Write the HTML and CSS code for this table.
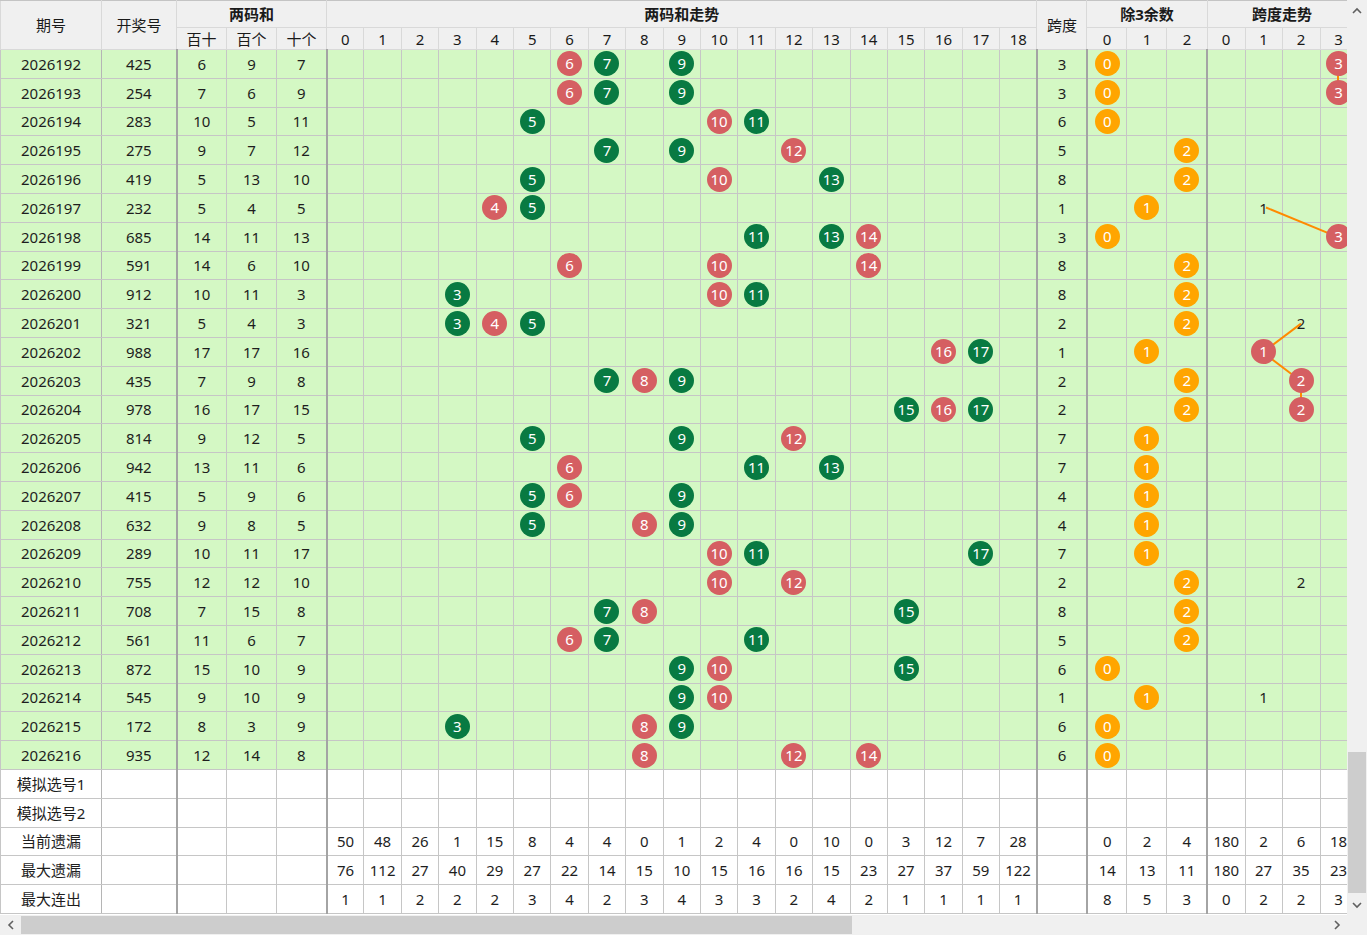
FILE: index.html
```html
<!DOCTYPE html>
<html lang="zh-CN">
<head>
<meta charset="utf-8">
<title>两码和走势</title>
<link rel="stylesheet" href="styles.css">
</head>
<body>
<div class="window">
  <div class="main">
    <div class="viewport">
      <table class="grid">
        <colgroup>
          <col class="c101"><col class="c75">
          <col class="c50"><col class="c50"><col class="c50">
          <col class="t"><col class="t"><col class="t"><col class="t"><col class="t"><col class="t"><col class="t"><col class="t"><col class="t"><col class="t"><col class="t"><col class="t"><col class="t"><col class="t"><col class="t"><col class="t"><col class="t"><col class="t"><col class="t">
          <col class="c50">
          <col class="c40"><col class="c40"><col class="c40">
          <col class="c38"><col class="c37"><col class="c38"><col class="c37">
        </colgroup>
        <thead>
          <tr class="h1">
            <th rowspan="2">期号</th><th rowspan="2">开奖号</th>
            <th colspan="3" class="grp">两码和</th>
            <th colspan="19" class="grp">两码和走势</th>
            <th rowspan="2">跨度</th>
            <th colspan="3" class="grp">除3余数</th>
            <th colspan="4" class="grp">跨度走势</th>
          </tr>
          <tr class="h2">
            <th>百十</th><th>百个</th><th>十个</th>
            <th>0</th><th>1</th><th>2</th><th>3</th><th>4</th><th>5</th><th>6</th><th>7</th><th>8</th><th>9</th><th>10</th><th>11</th><th>12</th><th>13</th><th>14</th><th>15</th><th>16</th><th>17</th><th>18</th>
            <th>0</th><th>1</th><th>2</th>
            <th>0</th><th>1</th><th>2</th><th>3</th>
          </tr>
        </thead>
        <tbody>
          <tr class="d"><td>2026192</td><td>425</td><td>6</td><td>9</td><td>7</td><td></td><td></td><td></td><td></td><td></td><td></td><td><span class="b r">6</span></td><td><span class="b g">7</span></td><td></td><td><span class="b g">9</span></td><td></td><td></td><td></td><td></td><td></td><td></td><td></td><td></td><td></td><td>3</td><td><span class="b o">0</span></td><td></td><td></td><td></td><td></td><td></td><td><span class="b r">3</span></td></tr>
          <tr class="d"><td>2026193</td><td>254</td><td>7</td><td>6</td><td>9</td><td></td><td></td><td></td><td></td><td></td><td></td><td><span class="b r">6</span></td><td><span class="b g">7</span></td><td></td><td><span class="b g">9</span></td><td></td><td></td><td></td><td></td><td></td><td></td><td></td><td></td><td></td><td>3</td><td><span class="b o">0</span></td><td></td><td></td><td></td><td></td><td></td><td><span class="b r">3</span></td></tr>
          <tr class="d"><td>2026194</td><td>283</td><td>10</td><td>5</td><td>11</td><td></td><td></td><td></td><td></td><td></td><td><span class="b g">5</span></td><td></td><td></td><td></td><td></td><td><span class="b r">10</span></td><td><span class="b g">11</span></td><td></td><td></td><td></td><td></td><td></td><td></td><td></td><td>6</td><td><span class="b o">0</span></td><td></td><td></td><td></td><td></td><td></td><td></td></tr>
          <tr class="d"><td>2026195</td><td>275</td><td>9</td><td>7</td><td>12</td><td></td><td></td><td></td><td></td><td></td><td></td><td></td><td><span class="b g">7</span></td><td></td><td><span class="b g">9</span></td><td></td><td></td><td><span class="b r">12</span></td><td></td><td></td><td></td><td></td><td></td><td></td><td>5</td><td></td><td></td><td><span class="b o">2</span></td><td></td><td></td><td></td><td></td></tr>
          <tr class="d"><td>2026196</td><td>419</td><td>5</td><td>13</td><td>10</td><td></td><td></td><td></td><td></td><td></td><td><span class="b g">5</span></td><td></td><td></td><td></td><td></td><td><span class="b r">10</span></td><td></td><td></td><td><span class="b g">13</span></td><td></td><td></td><td></td><td></td><td></td><td>8</td><td></td><td></td><td><span class="b o">2</span></td><td></td><td></td><td></td><td></td></tr>
          <tr class="d"><td>2026197</td><td>232</td><td>5</td><td>4</td><td>5</td><td></td><td></td><td></td><td></td><td><span class="b r">4</span></td><td><span class="b g">5</span></td><td></td><td></td><td></td><td></td><td></td><td></td><td></td><td></td><td></td><td></td><td></td><td></td><td></td><td>1</td><td></td><td><span class="b o">1</span></td><td></td><td></td><td>1</td><td></td><td></td></tr>
          <tr class="d"><td>2026198</td><td>685</td><td>14</td><td>11</td><td>13</td><td></td><td></td><td></td><td></td><td></td><td></td><td></td><td></td><td></td><td></td><td></td><td><span class="b g">11</span></td><td></td><td><span class="b g">13</span></td><td><span class="b r">14</span></td><td></td><td></td><td></td><td></td><td>3</td><td><span class="b o">0</span></td><td></td><td></td><td></td><td></td><td></td><td><span class="b r">3</span></td></tr>
          <tr class="d"><td>2026199</td><td>591</td><td>14</td><td>6</td><td>10</td><td></td><td></td><td></td><td></td><td></td><td></td><td><span class="b r">6</span></td><td></td><td></td><td></td><td><span class="b r">10</span></td><td></td><td></td><td></td><td><span class="b r">14</span></td><td></td><td></td><td></td><td></td><td>8</td><td></td><td></td><td><span class="b o">2</span></td><td></td><td></td><td></td><td></td></tr>
          <tr class="d"><td>2026200</td><td>912</td><td>10</td><td>11</td><td>3</td><td></td><td></td><td></td><td><span class="b g">3</span></td><td></td><td></td><td></td><td></td><td></td><td></td><td><span class="b r">10</span></td><td><span class="b g">11</span></td><td></td><td></td><td></td><td></td><td></td><td></td><td></td><td>8</td><td></td><td></td><td><span class="b o">2</span></td><td></td><td></td><td></td><td></td></tr>
          <tr class="d"><td>2026201</td><td>321</td><td>5</td><td>4</td><td>3</td><td></td><td></td><td></td><td><span class="b g">3</span></td><td><span class="b r">4</span></td><td><span class="b g">5</span></td><td></td><td></td><td></td><td></td><td></td><td></td><td></td><td></td><td></td><td></td><td></td><td></td><td></td><td>2</td><td></td><td></td><td><span class="b o">2</span></td><td></td><td></td><td>2</td><td></td></tr>
          <tr class="d"><td>2026202</td><td>988</td><td>17</td><td>17</td><td>16</td><td></td><td></td><td></td><td></td><td></td><td></td><td></td><td></td><td></td><td></td><td></td><td></td><td></td><td></td><td></td><td></td><td><span class="b r">16</span></td><td><span class="b g">17</span></td><td></td><td>1</td><td></td><td><span class="b o">1</span></td><td></td><td></td><td><span class="b r">1</span></td><td></td><td></td></tr>
          <tr class="d"><td>2026203</td><td>435</td><td>7</td><td>9</td><td>8</td><td></td><td></td><td></td><td></td><td></td><td></td><td></td><td><span class="b g">7</span></td><td><span class="b r">8</span></td><td><span class="b g">9</span></td><td></td><td></td><td></td><td></td><td></td><td></td><td></td><td></td><td></td><td>2</td><td></td><td></td><td><span class="b o">2</span></td><td></td><td></td><td><span class="b r">2</span></td><td></td></tr>
          <tr class="d"><td>2026204</td><td>978</td><td>16</td><td>17</td><td>15</td><td></td><td></td><td></td><td></td><td></td><td></td><td></td><td></td><td></td><td></td><td></td><td></td><td></td><td></td><td></td><td><span class="b g">15</span></td><td><span class="b r">16</span></td><td><span class="b g">17</span></td><td></td><td>2</td><td></td><td></td><td><span class="b o">2</span></td><td></td><td></td><td><span class="b r">2</span></td><td></td></tr>
          <tr class="d"><td>2026205</td><td>814</td><td>9</td><td>12</td><td>5</td><td></td><td></td><td></td><td></td><td></td><td><span class="b g">5</span></td><td></td><td></td><td></td><td><span class="b g">9</span></td><td></td><td></td><td><span class="b r">12</span></td><td></td><td></td><td></td><td></td><td></td><td></td><td>7</td><td></td><td><span class="b o">1</span></td><td></td><td></td><td></td><td></td><td></td></tr>
          <tr class="d"><td>2026206</td><td>942</td><td>13</td><td>11</td><td>6</td><td></td><td></td><td></td><td></td><td></td><td></td><td><span class="b r">6</span></td><td></td><td></td><td></td><td></td><td><span class="b g">11</span></td><td></td><td><span class="b g">13</span></td><td></td><td></td><td></td><td></td><td></td><td>7</td><td></td><td><span class="b o">1</span></td><td></td><td></td><td></td><td></td><td></td></tr>
          <tr class="d"><td>2026207</td><td>415</td><td>5</td><td>9</td><td>6</td><td></td><td></td><td></td><td></td><td></td><td><span class="b g">5</span></td><td><span class="b r">6</span></td><td></td><td></td><td><span class="b g">9</span></td><td></td><td></td><td></td><td></td><td></td><td></td><td></td><td></td><td></td><td>4</td><td></td><td><span class="b o">1</span></td><td></td><td></td><td></td><td></td><td></td></tr>
          <tr class="d"><td>2026208</td><td>632</td><td>9</td><td>8</td><td>5</td><td></td><td></td><td></td><td></td><td></td><td><span class="b g">5</span></td><td></td><td></td><td><span class="b r">8</span></td><td><span class="b g">9</span></td><td></td><td></td><td></td><td></td><td></td><td></td><td></td><td></td><td></td><td>4</td><td></td><td><span class="b o">1</span></td><td></td><td></td><td></td><td></td><td></td></tr>
          <tr class="d"><td>2026209</td><td>289</td><td>10</td><td>11</td><td>17</td><td></td><td></td><td></td><td></td><td></td><td></td><td></td><td></td><td></td><td></td><td><span class="b r">10</span></td><td><span class="b g">11</span></td><td></td><td></td><td></td><td></td><td></td><td><span class="b g">17</span></td><td></td><td>7</td><td></td><td><span class="b o">1</span></td><td></td><td></td><td></td><td></td><td></td></tr>
          <tr class="d"><td>2026210</td><td>755</td><td>12</td><td>12</td><td>10</td><td></td><td></td><td></td><td></td><td></td><td></td><td></td><td></td><td></td><td></td><td><span class="b r">10</span></td><td></td><td><span class="b r">12</span></td><td></td><td></td><td></td><td></td><td></td><td></td><td>2</td><td></td><td></td><td><span class="b o">2</span></td><td></td><td></td><td>2</td><td></td></tr>
          <tr class="d"><td>2026211</td><td>708</td><td>7</td><td>15</td><td>8</td><td></td><td></td><td></td><td></td><td></td><td></td><td></td><td><span class="b g">7</span></td><td><span class="b r">8</span></td><td></td><td></td><td></td><td></td><td></td><td></td><td><span class="b g">15</span></td><td></td><td></td><td></td><td>8</td><td></td><td></td><td><span class="b o">2</span></td><td></td><td></td><td></td><td></td></tr>
          <tr class="d"><td>2026212</td><td>561</td><td>11</td><td>6</td><td>7</td><td></td><td></td><td></td><td></td><td></td><td></td><td><span class="b r">6</span></td><td><span class="b g">7</span></td><td></td><td></td><td></td><td><span class="b g">11</span></td><td></td><td></td><td></td><td></td><td></td><td></td><td></td><td>5</td><td></td><td></td><td><span class="b o">2</span></td><td></td><td></td><td></td><td></td></tr>
          <tr class="d"><td>2026213</td><td>872</td><td>15</td><td>10</td><td>9</td><td></td><td></td><td></td><td></td><td></td><td></td><td></td><td></td><td></td><td><span class="b g">9</span></td><td><span class="b r">10</span></td><td></td><td></td><td></td><td></td><td><span class="b g">15</span></td><td></td><td></td><td></td><td>6</td><td><span class="b o">0</span></td><td></td><td></td><td></td><td></td><td></td><td></td></tr>
          <tr class="d"><td>2026214</td><td>545</td><td>9</td><td>10</td><td>9</td><td></td><td></td><td></td><td></td><td></td><td></td><td></td><td></td><td></td><td><span class="b g">9</span></td><td><span class="b r">10</span></td><td></td><td></td><td></td><td></td><td></td><td></td><td></td><td></td><td>1</td><td></td><td><span class="b o">1</span></td><td></td><td></td><td>1</td><td></td><td></td></tr>
          <tr class="d"><td>2026215</td><td>172</td><td>8</td><td>3</td><td>9</td><td></td><td></td><td></td><td><span class="b g">3</span></td><td></td><td></td><td></td><td></td><td><span class="b r">8</span></td><td><span class="b g">9</span></td><td></td><td></td><td></td><td></td><td></td><td></td><td></td><td></td><td></td><td>6</td><td><span class="b o">0</span></td><td></td><td></td><td></td><td></td><td></td><td></td></tr>
          <tr class="d"><td>2026216</td><td>935</td><td>12</td><td>14</td><td>8</td><td></td><td></td><td></td><td></td><td></td><td></td><td></td><td></td><td><span class="b r">8</span></td><td></td><td></td><td></td><td><span class="b r">12</span></td><td></td><td><span class="b r">14</span></td><td></td><td></td><td></td><td></td><td>6</td><td><span class="b o">0</span></td><td></td><td></td><td></td><td></td><td></td><td></td></tr>
          <tr class="s"><td>模拟选号1</td><td></td><td></td><td></td><td></td><td></td><td></td><td></td><td></td><td></td><td></td><td></td><td></td><td></td><td></td><td></td><td></td><td></td><td></td><td></td><td></td><td></td><td></td><td></td><td></td><td></td><td></td><td></td><td></td><td></td><td></td><td></td></tr>
          <tr class="s"><td>模拟选号2</td><td></td><td></td><td></td><td></td><td></td><td></td><td></td><td></td><td></td><td></td><td></td><td></td><td></td><td></td><td></td><td></td><td></td><td></td><td></td><td></td><td></td><td></td><td></td><td></td><td></td><td></td><td></td><td></td><td></td><td></td><td></td></tr>
          <tr class="s"><td>当前遗漏</td><td></td><td></td><td></td><td></td><td>50</td><td>48</td><td>26</td><td>1</td><td>15</td><td>8</td><td>4</td><td>4</td><td>0</td><td>1</td><td>2</td><td>4</td><td>0</td><td>10</td><td>0</td><td>3</td><td>12</td><td>7</td><td>28</td><td></td><td>0</td><td>2</td><td>4</td><td>180</td><td>2</td><td>6</td><td>18</td></tr>
          <tr class="s"><td>最大遗漏</td><td></td><td></td><td></td><td></td><td>76</td><td>112</td><td>27</td><td>40</td><td>29</td><td>27</td><td>22</td><td>14</td><td>15</td><td>10</td><td>15</td><td>16</td><td>16</td><td>15</td><td>23</td><td>27</td><td>37</td><td>59</td><td>122</td><td></td><td>14</td><td>13</td><td>11</td><td>180</td><td>27</td><td>35</td><td>23</td></tr>
          <tr class="s"><td>最大连出</td><td></td><td></td><td></td><td></td><td>1</td><td>1</td><td>2</td><td>2</td><td>2</td><td>3</td><td>4</td><td>2</td><td>3</td><td>4</td><td>3</td><td>3</td><td>2</td><td>4</td><td>2</td><td>1</td><td>1</td><td>1</td><td>1</td><td></td><td>8</td><td>5</td><td>3</td><td>0</td><td>2</td><td>2</td><td>3</td></tr>
        </tbody>
      </table>
      <svg class="lines" width="1347" height="915" viewBox="0 0 1347 915">
        <g stroke="#ff8a00" stroke-width="2" fill="none">
          <line x1="1338" y1="64.4" x2="1338" y2="93.2"/>
          <line x1="1266" y1="207.5" x2="1338" y2="237.2"/>
          <line x1="1301" y1="323.6" x2="1263" y2="352.4"/>
          <line x1="1263" y1="352.4" x2="1301" y2="381.2"/>
          <line x1="1301" y1="381.2" x2="1301" y2="410"/>
        </g>
      </svg>
    </div>
    <div class="vscroll">
      <div class="arrow"><svg width="10" height="7" viewBox="0 0 10 7"><polyline points="1,6 5,2 9,6" fill="none" stroke="#606060" stroke-width="1.6"/></svg></div>
      <div class="vtrack"><div class="vthumb"></div></div>
      <div class="arrow"><svg width="10" height="7" viewBox="0 0 10 7"><polyline points="1,1 5,5 9,1" fill="none" stroke="#606060" stroke-width="1.6"/></svg></div>
    </div>
  </div>
  <div class="hscroll">
    <div class="harrow"><svg width="7" height="10" viewBox="0 0 7 10"><polyline points="6,1 2,5 6,9" fill="none" stroke="#606060" stroke-width="1.6"/></svg></div>
    <div class="htrack"><div class="hthumb"></div></div>
    <div class="harrow"><svg width="7" height="10" viewBox="0 0 7 10"><polyline points="1,1 5,5 1,9" fill="none" stroke="#606060" stroke-width="1.6"/></svg></div>
    <div class="corner"></div>
  </div>
</div>
</body>
</html>
```
FILE: styles.css
```css
html, body {
  margin: 0;
  padding: 0;
}
body {
  font-family: "Noto Sans", "Noto Sans CJK SC", sans-serif;
  font-size: 15px;
  color: #1e1e1e;
  background: #f0f0f0;
}
.window {
  width: 1367px;
  height: 935px;
  display: flex;
  flex-direction: column;
  overflow: hidden;
}
.main {
  display: flex;
  height: 915px;
}
.viewport {
  width: 1347px;
  height: 915px;
  overflow: hidden;
  position: relative;
  background: #ffffff;
}
.grid {
  border-collapse: collapse;
  table-layout: fixed;
  width: 1357px;
}
.c101 { width: 101px; }
.c75 { width: 75px; }
.c50 { width: 50px; }
.t { width: 37.4px; }
.c40 { width: 40px; }
.c38 { width: 38px; }
.c37 { width: 37px; }

.grid th,
.grid td {
  padding: 0;
  text-align: center;
  vertical-align: middle;
  white-space: nowrap;
  overflow: hidden;
  line-height: 20px;
}
.grid th {
  background: #f0f0f0;
  font-weight: normal;
  color: #1a1a1a;
  border: 1px solid #d9d9d9;
}
.grid th.grp {
  font-weight: bold;
}
.grid thead tr:first-child th {
  border-top: 1px solid #c4c4c4;
}
.h1 { height: 27px; }
.h2 { height: 22px; }

.grid td {
  border: 1px solid #c6c6c6;
}
tr.d { height: 28.8px; }
tr.d td { background: #d4f8c4; }
tr.s { height: 28.8px; }
tr.s td { background: #ffffff; }

.grid tbody td:nth-child(1) {
  border-right-color: #b5b5b5;
}
.grid tbody td:nth-child(2),
.grid tbody td:nth-child(5),
.grid tbody td:nth-child(24),
.grid tbody td:nth-child(25),
.grid tbody td:nth-child(28) {
  border-right: 2px solid #a4a4a4;
}

.b {
  display: block;
  margin: 0 auto;
  width: 25px;
  height: 25px;
  border-radius: 50%;
  color: #ffffff;
  line-height: 25px;
  font-size: 15px;
  position: relative;
  z-index: 2;
}
.r { background: #d55f62; }
.g { background: #087a42; }
.o { background: #ffa500; }

.lines {
  position: absolute;
  left: 0;
  top: 0;
  z-index: 1;
  pointer-events: none;
}

.vscroll {
  width: 20px;
  height: 915px;
  background: #f0f0f0;
  display: flex;
  flex-direction: column;
}
.arrow {
  height: 20px;
  display: flex;
  align-items: center;
  justify-content: center;
}
.vtrack {
  flex: 1;
  display: flex;
  flex-direction: column;
  justify-content: flex-end;
  align-items: center;
  padding-bottom: 2px;
}
.vthumb {
  width: 18px;
  height: 141px;
  background: #cdcdcd;
}
.hscroll {
  height: 20px;
  display: flex;
  background: #f0f0f0;
}
.harrow {
  width: 20px;
  display: flex;
  align-items: center;
  justify-content: center;
}
.htrack {
  flex: 1;
  display: flex;
  align-items: center;
}
.hthumb {
  margin-left: 1px;
  width: 831px;
  height: 18px;
  background: #cdcdcd;
}
.corner {
  width: 20px;
}
```
